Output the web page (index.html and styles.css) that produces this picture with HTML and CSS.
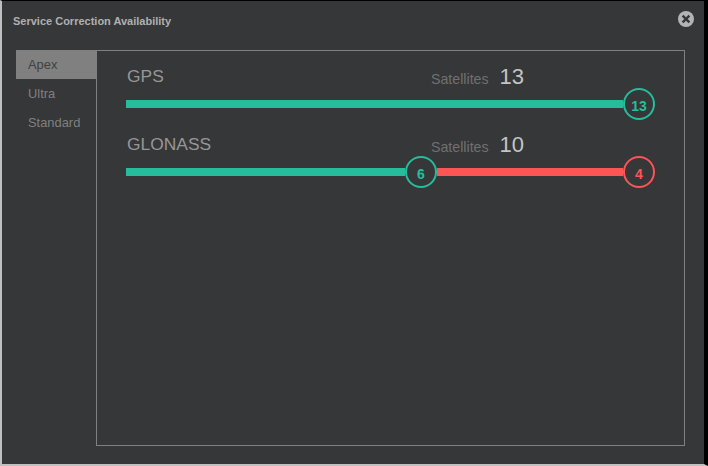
FILE: index.html
```html
<!DOCTYPE html>
<html lang="en">
<head>
  <meta charset="UTF-8" />
  <meta name="viewport" content="width=device-width, initial-scale=1.0"/>
  <title>Service Correction Availability</title>
  <link rel="stylesheet" href="styles.css">
</head>
<body>

  <div class="dialog">
    <div class="dialog-header">
      <h1>Service Correction Availability</h1>
      <button class="close" aria-label="Close">
        <svg width="16" height="16" viewBox="0 0 16 16">
          <circle cx="8" cy="8" r="8" fill="#b4b4b4"/>
          <path d="M4.6 4.6 L11.4 11.4 M11.4 4.6 L4.6 11.4" stroke="#36373a" stroke-width="2.4" fill="none"/>
        </svg>
      </button>
    </div>

    <div class="dialog-body">
      <ul class="tabs">
        <li class="tab active">Apex</li>
        <li class="tab">Ultra</li>
        <li class="tab">Standard</li>
      </ul>

      <div class="panel">
        <div class="constellation">
          <div class="row-head">
            <span class="name">GPS</span>
            <span class="count"><span class="count-label">Satellites</span><span class="count-value">13</span></span>
          </div>
          <div class="track">
            <div class="seg green" style="flex-grow: 13"></div>
            <div class="knob green-knob">13</div>
          </div>
        </div>

        <div class="constellation">
          <div class="row-head">
            <span class="name">GLONASS</span>
            <span class="count"><span class="count-label">Satellites</span><span class="count-value">10</span></span>
          </div>
          <div class="track">
            <div class="seg green" style="flex-grow: 6"></div>
            <div class="knob green-knob">6</div>
            <div class="seg red" style="flex-grow: 4"></div>
            <div class="knob red-knob">4</div>
          </div>
        </div>
      </div>
    </div>
  </div>

</body>
</html>
```

FILE: styles.css
```css
html, body {
  margin: 0;
  padding: 0;
  height: 100%;
  overflow: hidden;
  background: #c0c0c0;
}

body {
  font-family: "Liberation Sans", Arial, sans-serif;
}

.dialog {
  box-sizing: border-box;
  width: 708px;
  height: 466px;
  display: flex;
  flex-direction: column;
  background: #363739;
  border-top: 1px solid #000;
  border-right: 4px solid #000;
  border-left: 2px solid #c0c0c0;
  border-bottom: 2px solid #c0c0c0;
}

.dialog-header {
  height: 40px;
  margin-bottom: 9px;
  padding: 0 10px 0 11px;
  display: flex;
  align-items: center;
  justify-content: space-between;
  flex: none;
}

.dialog-header h1 {
  margin: 0;
  font-size: 11px;
  font-weight: bold;
  color: #b0b0b0;
}

.close {
  width: 16px;
  height: 16px;
  padding: 0;
  margin-top: -4px;
  border: 0;
  background: none;
  display: block;
}

.close svg {
  display: block;
}

.dialog-body {
  flex: 1;
  display: flex;
  padding: 0 19px 18px 14px;
}

.tabs {
  list-style: none;
  margin: 0;
  padding: 0;
  width: 80px;
  flex: none;
}

.tab {
  height: 29px;
  line-height: 30px;
  padding-left: 12px;
  font-size: 12.9px;
  color: #808080;
}

.tab.active {
  background: #808080;
  color: #404040;
}

.panel {
  flex: 1;
  border: 1px solid #808080;
  padding: 0 29px;
}

.constellation {
  height: 68px;
}

.row-head {
  height: 37px;
  padding: 0 131px 0 1px;
  display: flex;
  justify-content: space-between;
  align-items: flex-end;
  box-sizing: border-box;
}

.name {
  font-size: 17.4px;
  line-height: 20px;
  color: #969696;
  margin-bottom: 2px;
}

.count {
  display: flex;
  align-items: baseline;
  width: 93px;
  margin-bottom: -2px;
}

.count-label {
  font-size: 14.2px;
  color: #707070;
  width: 69px;
}

.count-value {
  font-size: 22px;
  color: #c4c4c4;
}

.track {
  display: flex;
  align-items: center;
  height: 32px;
}

.seg {
  height: 8px;
  flex-basis: 0;
}

.green {
  background: #26bd9c;
}

.red {
  background: #fb5555;
}

.knob {
  box-sizing: border-box;
  width: 32px;
  height: 32px;
  padding-top: 3px;
  border-radius: 50%;
  border: 2px solid;
  display: flex;
  align-items: center;
  justify-content: center;
  font-size: 14px;
  font-weight: bold;
  flex: none;
}

.green-knob {
  border-color: #26bd9c;
  color: #26bd9c;
}

.red-knob {
  border-color: #fb5555;
  color: #fb5555;
}
```
